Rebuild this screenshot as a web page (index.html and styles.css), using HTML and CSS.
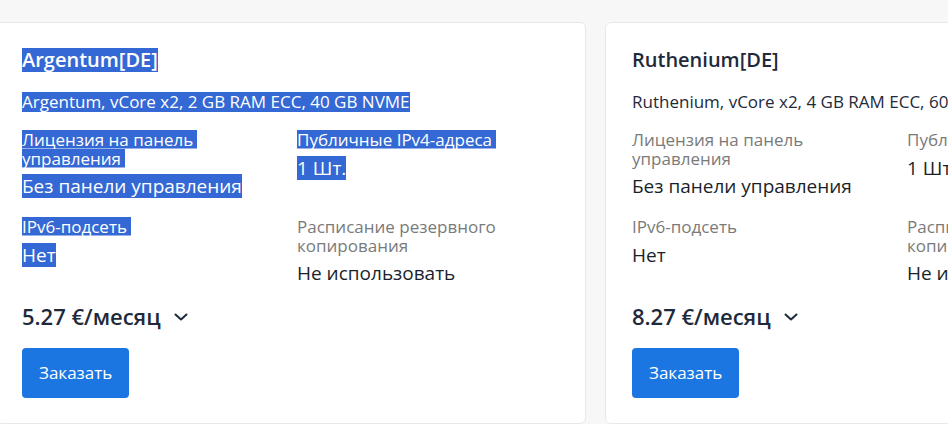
FILE: index.html
```html
<!DOCTYPE html>
<html lang="ru">
<head>
<meta charset="utf-8">
<link rel="stylesheet" href="styles.css">
</head>
<body>
<div class="list">
  <div class="card">
    <div class="title"><span class="sel">Argentum[DE]</span></div>
    <div class="sub"><span class="sel">Argentum, vCore x2, 2 GB RAM ECC, 40 GB NVME</span></div>
    <div class="grid">
      <div class="item">
        <div class="label"><span class="sel sp">Лицензия на панель управления</span></div>
        <div class="value"><span class="sel">Без панели управления</span></div>
      </div>
      <div class="item">
        <div class="label"><span class="sel sp">Публичные IPv4-адреса</span></div>
        <div class="value"><span class="sel">1 Шт.</span></div>
      </div>
      <div class="item">
        <div class="label"><span class="sel sp">IPv6-подсеть</span></div>
        <div class="value"><span class="sel">Нет</span></div>
      </div>
      <div class="item">
        <div class="label">Расписание резервного копирования</div>
        <div class="value">Не использовать</div>
      </div>
    </div>
    <div class="price">5.27 €/месяц
      <svg class="chev" width="14" height="8" viewBox="0 0 14 8"><path d="M1.5 1.5 L7 6.5 L12.5 1.5" fill="none" stroke="#1e2a3b" stroke-width="2" stroke-linecap="round" stroke-linejoin="round"/></svg>
    </div>
    <button class="btn">Заказать</button>
  </div>
  <div class="card">
    <div class="title">Ruthenium[DE]</div>
    <div class="sub">Ruthenium, vCore x2, 4 GB RAM ECC, 60 GB NVME</div>
    <div class="grid">
      <div class="item">
        <div class="label">Лицензия на панель управления</div>
        <div class="value">Без панели управления</div>
      </div>
      <div class="item">
        <div class="label">Публичные IPv4-адреса</div>
        <div class="value">1 Шт.</div>
      </div>
      <div class="item">
        <div class="label">IPv6-подсеть</div>
        <div class="value">Нет</div>
      </div>
      <div class="item">
        <div class="label">Расписание резервного копирования</div>
        <div class="value">Не использовать</div>
      </div>
    </div>
    <div class="price">8.27 €/месяц
      <svg class="chev" width="14" height="8" viewBox="0 0 14 8"><path d="M1.5 1.5 L7 6.5 L12.5 1.5" fill="none" stroke="#1e2a3b" stroke-width="2" stroke-linecap="round" stroke-linejoin="round"/></svg>
    </div>
    <button class="btn">Заказать</button>
  </div>
</div>
</body>
</html>
```
FILE: styles.css
```css
html, body {
  margin: 0;
  padding: 0;
  background: #f7f7f7;
  overflow: hidden;
  width: 948px;
  height: 424px;
}
body {
  font-family: "Open Sans", "Noto Sans", sans-serif;
  color: #1c2230;
}
.list {
  display: flex;
  gap: 19px;
  padding-top: 22px;
  margin-left: -5px;
  width: 1300px;
}
.card {
  flex: 0 0 auto;
  width: 537px;
  background: #fff;
  border: 1px solid #e8e8e8;
  border-radius: 6px;
  padding: 25px 26px 23px;
  height: 352px;
}
.title {
  font-size: 20px;
  font-weight: 600;
  line-height: 24px;
  color: #1e2a3b;
}
.sub {
  margin-top: 20px;
  font-size: 17px;
  line-height: 20px;
  color: #1e2a3b;
}
.grid {
  margin-top: 19px;
  display: grid;
  grid-template-columns: 255px 1fr;
  column-gap: 20px;
  row-gap: 20px;
}
.label {
  font-size: 17px;
  line-height: 18.5px;
  color: #7a7a7a;
}
.value {
  margin-top: 6px;
  font-size: 19px;
  line-height: 24px;
  color: #1a1f2b;
}
.price {
  margin-top: 15px;
  font-size: 22px;
  font-weight: 600;
  line-height: 32px;
  color: #1e2a3b;
  display: flex;
  align-items: center;
  gap: 13px;
}
.chev {
  display: block;
  margin-top: 2px;
}
.btn {
  display: block;
  margin-top: 16px;
  background: #1b76e2;
  color: #fff;
  border: 0;
  border-radius: 4px;
  font-family: inherit;
  font-size: 17px;
  line-height: 20px;
  padding: 15px 17px;
  height: 50px;
}
.sel {
  color: #fff;
  background-image: linear-gradient(#3468d4, #3468d4);
  background-repeat: no-repeat;
  background-position: 0 50%;
  background-size: 100% 100%;
}
.title .sel { background-size: 100% 24px; }
.sub .sel { background-size: 100% 20px; }
.label .sel { background-size: 100% 18.5px; }
.value .sel { background-size: 100% 24px; }
.sp {
  padding-right: 4px;
  -webkit-box-decoration-break: clone;
  box-decoration-break: clone;
}
```
